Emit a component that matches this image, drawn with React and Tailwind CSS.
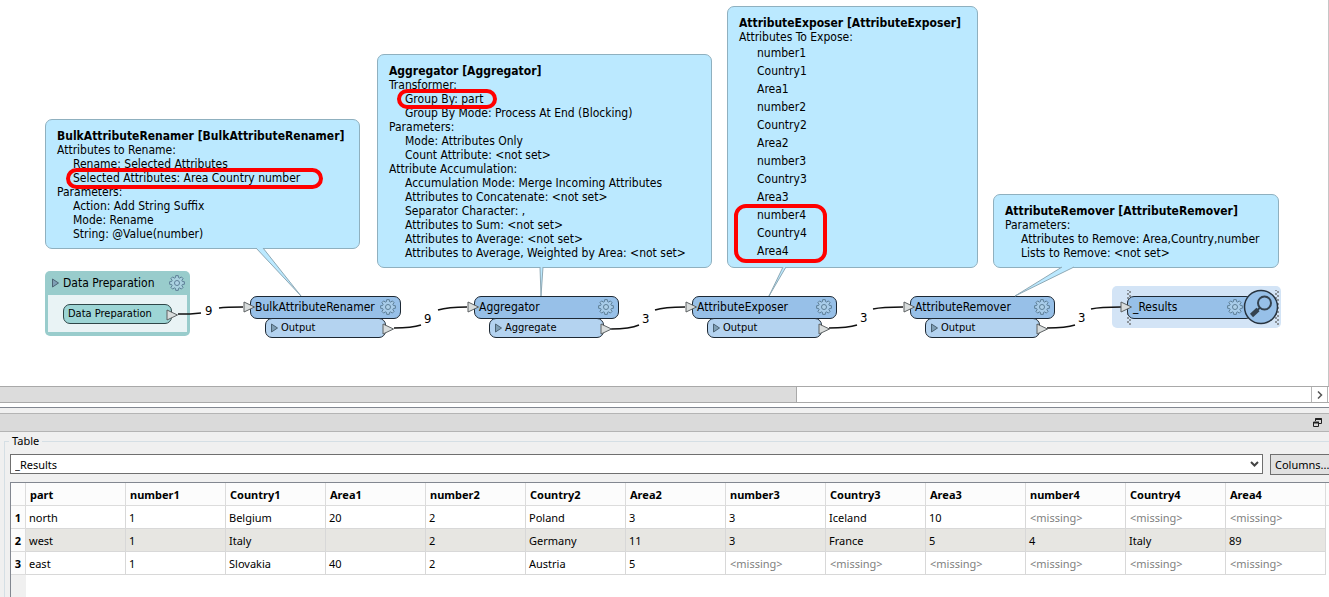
import React from 'react';

const callouts = [
  {
    title: 'BulkAttributeRenamer [BulkAttributeRenamer]',
    place: 'left-[45px] top-[119px] w-[315px]',
    lines: [
      'Attributes to Rename:',
      '>Rename: Selected Attributes',
      '>Selected Attributes: Area Country number',
      'Parameters:',
      '>Action: Add String Suffix',
      '>Mode: Rename',
      '>String: @Value(number)',
    ],
  },
  {
    title: 'Aggregator [Aggregator]',
    place: 'left-[377px] top-[54px] w-[335px]',
    lines: [
      'Transformer:',
      '>Group By: part',
      '>Group By Mode: Process At End (Blocking)',
      'Parameters:',
      '>Mode: Attributes Only',
      '>Count Attribute: <not set>',
      'Attribute Accumulation:',
      '>Accumulation Mode: Merge Incoming Attributes',
      '>Attributes to Concatenate: <not set>',
      '>Separator Character: ,',
      '>Attributes to Sum: <not set>',
      '>Attributes to Average: <not set>',
      '>Attributes to Average, Weighted by Area: <not set>',
    ],
  },
  {
    title: 'AttributeExposer [AttributeExposer]',
    place: 'left-[727px] top-[6px] w-[251px]',
    lines: ['Attributes To Expose:'],
    list: [
      'number1', 'Country1', 'Area1',
      'number2', 'Country2', 'Area2',
      'number3', 'Country3', 'Area3',
      'number4', 'Country4', 'Area4',
    ],
  },
  {
    title: 'AttributeRemover [AttributeRemover]',
    place: 'left-[993px] top-[194px] w-[286px]',
    lines: [
      'Parameters:',
      '>Attributes to Remove: Area,Country,number',
      '>Lists to Remove: <not set>',
    ],
  },
];

const transformers = [
  { name: 'BulkAttributeRenamer', port: 'Output', place: 'left-[250px] w-[151px]', portWidth: 'w-[121px]' },
  { name: 'Aggregator', port: 'Aggregate', place: 'left-[474px] w-[145px]', portWidth: 'w-[115px]' },
  { name: 'AttributeExposer', port: 'Output', place: 'left-[692px] w-[145px]', portWidth: 'w-[115px]' },
  { name: 'AttributeRemover', port: 'Output', place: 'left-[910px] w-[145px]', portWidth: 'w-[115px]' },
];

const counts = [
  { value: 9, place: 'left-[205px] top-[303px]' },
  { value: 9, place: 'left-[424px] top-[311px]' },
  { value: 3, place: 'left-[642px] top-[311px]' },
  { value: 3, place: 'left-[860px] top-[310px]' },
  { value: 3, place: 'left-[1078px] top-[310px]' },
];

const wires = [
  'M178 314H190L201 313',
  'M219 308Q226 307 243 307',
  'M394 328Q412 328 421 325',
  'M438 310Q448 307 467 307',
  'M611 329Q630 329 639 325',
  'M655 310Q664 307 685 307',
  'M829 328Q848 328 857 325',
  'M873 309Q882 307 903 307',
  'M1047 328Q1066 328 1075 325',
  'M1091 309Q1100 307 1121 307',
];

const tails = [
  'M256 248L301 296L263 248',
  'M540 267L541 296L543 267',
  'M783 267L769 296L786 267',
  'M1062 267L1015 296L1074 267',
];

const highlights = [
  'left-[66px] top-[168px] w-[257px] h-[21px] rounded-full',
  'left-[397px] top-[89px] w-[100px] h-[20px] rounded-full',
  'left-[734px] top-[204px] w-[93px] h-[59px] rounded-xl',
];

const columns = [
  'part', 'number1', 'Country1', 'Area1', 'number2', 'Country2', 'Area2',
  'number3', 'Country3', 'Area3', 'number4', 'Country4', 'Area4',
];

// null is an attribute that the feature does not have
const rows = [
  ['north', '1', 'Belgium', '20', '2', 'Poland', '3', '3', 'Iceland', '10', null, null, null],
  ['west', '1', 'Italy', '', '2', 'Germany', '11', '3', 'France', '5', '4', 'Italy', '89'],
  ['east', '1', 'Slovakia', '40', '2', 'Austria', '5', null, null, null, null, null, null],
];

function gearPath() {
  const points = [];
  for (let i = 0; i < 8; i++) {
    const a = (i * Math.PI) / 4;
    [[-0.27, 5.6], [-0.17, 7.5], [0.17, 7.5], [0.27, 5.6]].forEach(([da, r]) => {
      points.push(`${(8 + r * Math.sin(a + da)).toFixed(2)} ${(8 - r * Math.cos(a + da)).toFixed(2)}`);
    });
  }
  return `M${points.join('L')}Z`;
}

const GEAR = gearPath();

function GearButton({ label }) {
  return (
    <button type="button" aria-label={label} className="shrink-0">
      <svg width="16" height="16" viewBox="0 0 16 16" fill="#b4d4ea" fillOpacity="0.6" stroke="#5d7f97" strokeLinejoin="round">
        <path d={GEAR} />
        <circle cx="8" cy="8" r="2.5" />
      </svg>
    </button>
  );
}

function Expander() {
  return (
    <svg className="shrink-0" width="7" height="10" viewBox="0 0 7 10" fill="#7f9fb5" stroke="#4b6272">
      <path d="M.5 1L6.5 5L.5 9Z" />
    </svg>
  );
}

function PortArrow({ className }) {
  return (
    <svg className={`absolute z-10 ${className}`} width="12" height="12" viewBox="0 0 12 12" fill="#d9dddd" stroke="#5c6163">
      <path d="M1 1L11.5 6L1 11Z" />
    </svg>
  );
}

function Callout({ title, place, lines, list }) {
  return (
    <div className={`absolute ${place} rounded-[7px] border border-[#8fb0bf] bg-[#bbe9ff] px-[11px] pt-[9px] pb-[7px] leading-[14px] whitespace-nowrap`}>
      <h3 className="font-bold">{title}</h3>
      {lines.map((line) => (
        <p key={line} className={line.startsWith('>') ? 'pl-4' : ''}>
          {line.replace(/^>/, '')}
        </p>
      ))}
      {list && (
        <ul className="pl-[18px] leading-[18px]">
          {list.map((item) => (
            <li key={item}>{item}</li>
          ))}
        </ul>
      )}
    </div>
  );
}

function Transformer({ name, port, place, portWidth }) {
  return (
    <div className={`absolute top-[296px] ${place}`}>
      <div className="relative flex h-[23px] items-center justify-between rounded-[7px] border border-[#1d2833] bg-[#97c0e8] pr-1 pb-px pl-1">
        <PortArrow className="-left-2 top-1" />
        <span className="leading-4">{name}</span>
        <GearButton label={`${name} parameters`} />
      </div>
      <div className={`relative -mt-px ml-[15px] flex h-5 items-center gap-[3px] rounded-[7px] border border-[#1d2833] bg-[#b4d3f0] pl-[5px] text-[11px] ${portWidth}`}>
        <Expander />
        <span>{port}</span>
        <PortArrow className="-right-[9px] top-1" />
      </div>
    </div>
  );
}

function Bookmark() {
  return (
    <div className="absolute left-[45px] top-[271px] w-[145px] rounded-[5px] bg-[#99cccc] px-[3px] pb-1">
      <div className="flex h-6 items-center gap-1 pr-[2px] pl-1">
        <Expander />
        <span className="grow">Data Preparation</span>
        <GearButton label="Data Preparation parameters" />
      </div>
      <div className="h-[37px] bg-[#e9f3f5] px-[15px] pt-[9px]">
        <div className="relative flex h-5 w-[109px] items-center rounded-[7px] border border-[#2f4648] bg-[#9dd5d5] pl-1 text-[11px]">
          Data Preparation
          <PortArrow className="-right-[7px] top-1" />
        </div>
      </div>
    </div>
  );
}

function Inspector() {
  return (
    <div className="absolute left-[1112px] top-[286px] h-[42px] w-[169px] rounded-[5px] bg-[#d3e4f6]">
      <svg className="absolute inset-0 size-full">
        <defs>
          <pattern id="hatch" width="4" height="4" patternUnits="userSpaceOnUse">
            <path d="M0 0L4 4M4 0L0 4" stroke="#8c939a" />
          </pattern>
        </defs>
        <rect x="15" y="4" width="4" height="35" fill="url(#hatch)" />
        <rect x="163" y="4" width="4" height="35" fill="url(#hatch)" />
      </svg>
      <div className="absolute left-[15px] top-[10px] flex h-[23px] w-[126px] items-center justify-between rounded-[7px] border border-[#1d2833] bg-[#97c0e8] pr-[9px] pb-px pl-[5px]">
        <PortArrow className="-left-2 top-1" />
        <span className="leading-4">_Results</span>
        <GearButton label="_Results parameters" />
      </div>
      <button type="button" aria-label="Inspect _Results" className="absolute left-[131px] top-[3px]">
        <svg width="36" height="36" viewBox="0 0 36 36" fill="none">
          <circle cx="18" cy="18" r="16.5" fill="#97c0e8" stroke="#27333f" strokeWidth="1.5" />
          <circle cx="21.5" cy="14" r="6.5" stroke="#34424f" strokeWidth="2" />
          <path d="M17 18.500L14.500 21" stroke="#34424f" strokeWidth="2" />
          <path d="M15 20.500L8.500 26.500" stroke="#34424f" strokeWidth="4.500" />
        </svg>
      </button>
    </div>
  );
}

function Canvas() {
  return (
    <main className="relative h-[386px] overflow-hidden border-r border-[#c6c6c6] bg-white font-['DejaVu_Sans_Condensed','DejaVu_Sans',sans-serif] text-xs">
      {callouts.map((callout) => (
        <Callout key={callout.title} {...callout} />
      ))}
      <Bookmark />
      {transformers.map((transformer) => (
        <Transformer key={transformer.name} {...transformer} />
      ))}
      <Inspector />
      <svg className="pointer-events-none absolute inset-0 size-full" fill="none">
        {tails.map((d) => (
          <path key={d} d={d} fill="#bbe9ff" stroke="#8fa9b5" />
        ))}
        {wires.map((d) => (
          <path key={d} d={d} stroke="#111" strokeWidth="1.5" />
        ))}
      </svg>
      {counts.map(({ value, place }) => (
        <span key={place} className={`absolute ${place} text-[13px] leading-4`}>
          {value}
        </span>
      ))}
      {highlights.map((place) => (
        <div key={place} className={`absolute border-4 border-[#ff0000] ${place}`} />
      ))}
    </main>
  );
}

function ScrollBar() {
  return (
    <div className="flex h-[17px] border-y border-[#a9a9a9] bg-white">
      <div className="w-3/5 border-r border-[#a9a9a9] bg-[#dcdcdc]" />
      <div className="grow" />
      <button type="button" aria-label="Scroll right" className="mr-px flex w-[17px] items-center justify-center border-x border-[#b5b5b5]">
        <svg width="6" height="8" viewBox="0 0 6 8" fill="none" stroke="#555" strokeWidth="1.5">
          <path d="M1 .5L4.500 4L1 7.500" />
        </svg>
      </button>
    </div>
  );
}

function ResultsTable() {
  return (
    <div className="ml-[5px] flex grow flex-col border-t border-l border-[#828790] bg-white">
      <table className="w-full table-fixed border-separate border-spacing-0 text-left">
        <colgroup>
          <col className="w-[15px]" />
          {columns.map((name) => (
            <col key={name} className="w-[100px]" />
          ))}
          <col />
        </colgroup>
        <thead>
          <tr className="h-[23px] bg-[#fcfcfc]">
            <th className="border-r border-b border-[#dcdcdc] p-0" />
            {columns.map((name) => (
              <th key={name} scope="col" className="border-r border-b border-[#dcdcdc] pt-[2px] pr-0 pb-0 pl-1 font-bold">
                {name}
              </th>
            ))}
            <th className="border-b border-[#dcdcdc] p-0" />
          </tr>
        </thead>
        <tbody>
          {rows.map((row, i) => (
            <tr key={row[0]} className="h-[23px]">
              <th scope="row" className="border-r border-b border-[#dcdcdc] bg-[#fcfcfc] px-0 pt-[2px] pb-0 text-center font-bold">
                {i + 1}
              </th>
              {row.map((value, j) => (
                <td
                  key={columns[j]}
                  className={`border-r border-b border-[#d8d8d8] pt-[2px] pr-0 pb-0 ${value === null ? 'pl-1 text-[#808080]' : 'pl-[3px]'} ${i % 2 ? 'bg-[#e7e6e2]' : 'bg-white'}`}
                >
                  {value === null ? '<missing>' : value}
                </td>
              ))}
              <td className="p-0" />
            </tr>
          ))}
        </tbody>
      </table>
      <div className="min-h-[22px] w-[15px] grow bg-[#f0f0f0]" />
    </div>
  );
}

function TablePanel() {
  return (
    <section className="flex grow flex-col">
      <div className="flex h-[19px] items-center justify-end border-y border-[#b4b4b4] bg-[#dadada] pr-[7px]">
        <button type="button" aria-label="Undock panel">
          <svg width="9" height="9" viewBox="0 0 9 9" fill="none" stroke="#222">
            <path d="M2.500 3V.5H8.500V5.500H6" />
            <path d="M2.500 1H8.500M.5 4.500H6" strokeWidth="2" />
            <path d="M.5 4V8.500H5.500V4" />
          </svg>
        </button>
      </div>
      <fieldset className="ml-1 flex min-w-0 grow flex-col overflow-hidden border-t border-l border-[#d5dfe5]">
        <legend className="ml-1 px-[3px] leading-[18px]">Table</legend>
        <div className="mt-1 mb-[7px] ml-[5px] flex gap-[7px]">
          <div className="relative grow">
            <select
              aria-label="Table"
              defaultValue="_Results"
              className="block h-5 w-full appearance-none border border-[#6f6f6f] bg-white px-1 pt-px leading-4"
            >
              <option>_Results</option>
            </select>
            <svg className="pointer-events-none absolute top-[7px] right-1" width="9" height="7" viewBox="0 0 9 7" fill="none" stroke="#444" strokeWidth="2">
              <path d="M1 1L4.500 4.500L8 1" />
            </svg>
          </div>
          <button type="button" className="-mr-4 h-[21px] w-[75px] shrink-0 border border-[#6f6f6f] bg-[#e1e1e1] px-1 text-left">
            Columns...
          </button>
        </div>
        <ResultsTable />
      </fieldset>
    </section>
  );
}

export default function App() {
  return (
    <div className="flex min-h-screen flex-col overflow-hidden bg-[#f0f0f0] font-['Noto_Sans',sans-serif] text-[11px] leading-4 text-black">
      <Canvas />
      <ScrollBar />
      <div className="mb-[5px] h-[5px] border-b border-[#828790] bg-white" />
      <TablePanel />
    </div>
  );
}
